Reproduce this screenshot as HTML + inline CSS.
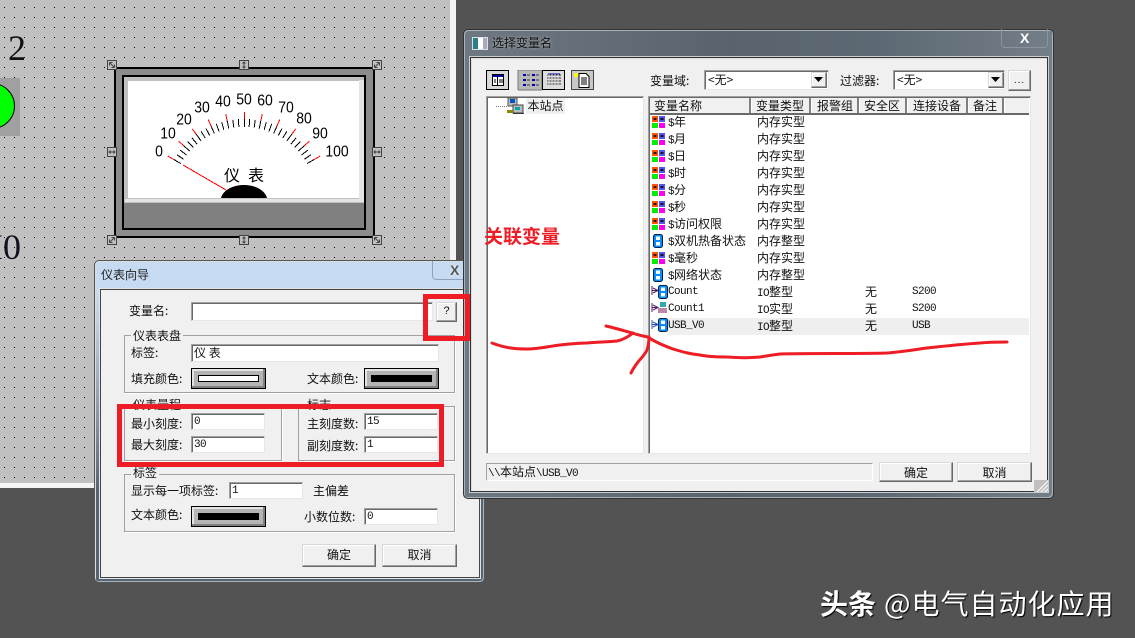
<!DOCTYPE html>
<html><head><meta charset="utf-8">
<style>
html,body{margin:0;padding:0}
#r{position:relative;width:1135px;height:638px;overflow:hidden;background:#535353;font:12px/14px "WenQuanYi Zen Hei","Noto Sans CJK SC",sans-serif;color:#111}
#r div,#r svg.a{position:absolute}
.t{white-space:nowrap}
.m{font:11px/14px "Liberation Mono",monospace;letter-spacing:-.6px}
.i{background:#fff;box-sizing:border-box;border:1px solid;border-color:#a0a0a0 #e6e6e6 #e6e6e6 #a0a0a0;box-shadow:inset 1px 1px 0 #696969;padding:1px 0 0 2px;white-space:nowrap}
.b{background:#f0f0f0;box-sizing:border-box;border:1px solid;border-color:#d8d8d8 #696969 #696969 #d8d8d8;box-shadow:inset -1px -1px 0 #a0a0a0,inset 1px 1px 0 #fff;text-align:center;line-height:20px}
.g{box-sizing:border-box;border:1px solid #a0a0a0;box-shadow:1px 1px 0 #fff}
.l{background:#f0f0f0;padding:0 2px;white-space:nowrap}
.c{box-sizing:border-box;width:75px;height:21px;background:#b4b4b4;border:1px solid #000;box-shadow:inset -2px -2px 0 #808080,inset 2px 2px 0 #e4e4e4}
#r svg.h{position:absolute;width:10px;height:10px}
.n{left:668px;white-space:nowrap}.y{left:757px;white-space:nowrap}
.hd{top:97px;height:16px;line-height:17px;white-space:nowrap}
.sp{top:98px;width:2px;height:15px;background:#808080;border-right:1px solid #fff}
.rd{background:#ee1c25}
.k{text-align:center;font:14px/20px "Liberation Sans",sans-serif;color:#000;transform:scaleY(1.12);white-space:nowrap}
</style></head><body><div id="r">

<!-- canvas -->
<svg class="a" style="left:0;top:0" width="450" height="483"><defs><pattern id="d" x="4" y="7" width="10" height="10" patternUnits="userSpaceOnUse"><rect width="1" height="1" fill="#000"/></pattern></defs><rect width="450" height="483" fill="#c0c0c0"/><rect width="450" height="483" fill="url(#d)"/></svg>
<div style="left:450px;top:0;width:6px;height:488px;background:#f4f4f4"></div>
<div style="left:0;top:483px;width:456px;height:5px;background:#f4f4f4"></div>

<div class="t" style="left:8px;top:28px;font:36px/40px 'Liberation Serif',serif;color:#111">2</div>
<div class="t" style="left:-9px;top:227px;font:36px/40px 'Liberation Serif',serif;color:#112">I0</div>
<div style="left:0;top:78px;width:20px;height:58px;background:#a0a0a0"></div>
<svg class="a" style="left:0;top:78px" width="20" height="58"><circle cx="-8" cy="28" r="22.5" fill="#0f0" stroke="#000"/></svg>

<!-- meter -->
<div style="left:114px;top:67px;width:261px;height:171px;box-sizing:border-box;background:#8c8c8c;border:2px solid #000"></div>
<div style="left:122px;top:75px;width:244px;height:155px;box-sizing:border-box;background:#808080;border:2px solid #000"></div>
<div style="left:124px;top:77px;width:240px;height:126px;background:#c0c0c0"></div>
<div style="left:359px;top:80px;width:5px;height:122px;background:#e4e4e4"></div>
<div style="left:125px;top:199px;width:239px;height:3px;background:#e4e4e4"></div>
<div style="left:128px;top:81px;width:231px;height:117px;background:#fff"></div>
<svg class="a" style="left:0;top:0" width="460" height="260">
<g stroke="#000" shape-rendering="crispEdges" fill="none">
<path transform="rotate(-60 244 200)" d="M244 127V119"/><path transform="rotate(-56 244 200)" d="M244 127V119"/><path transform="rotate(-52 244 200)" d="M244 127V119"/><path transform="rotate(-48 244 200)" d="M244 127V119"/><path transform="rotate(-44 244 200)" d="M244 127V119"/><path transform="rotate(-40 244 200)" d="M244 127V119"/><path transform="rotate(-36 244 200)" d="M244 127V119"/><path transform="rotate(-32 244 200)" d="M244 127V119"/><path transform="rotate(-28 244 200)" d="M244 127V119"/><path transform="rotate(-24 244 200)" d="M244 127V119"/><path transform="rotate(-20 244 200)" d="M244 127V119"/><path transform="rotate(-16 244 200)" d="M244 127V119"/><path transform="rotate(-12 244 200)" d="M244 127V119"/><path transform="rotate(-8 244 200)" d="M244 127V119"/><path transform="rotate(-4 244 200)" d="M244 127V119"/><path d="M244.500 127V119"/><path transform="rotate(4 244 200)" d="M244 127V119"/><path transform="rotate(8 244 200)" d="M244 127V119"/><path transform="rotate(12 244 200)" d="M244 127V119"/><path transform="rotate(16 244 200)" d="M244 127V119"/><path transform="rotate(20 244 200)" d="M244 127V119"/><path transform="rotate(24 244 200)" d="M244 127V119"/><path transform="rotate(28 244 200)" d="M244 127V119"/><path transform="rotate(32 244 200)" d="M244 127V119"/><path transform="rotate(36 244 200)" d="M244 127V119"/><path transform="rotate(40 244 200)" d="M244 127V119"/><path transform="rotate(44 244 200)" d="M244 127V119"/><path transform="rotate(48 244 200)" d="M244 127V119"/><path transform="rotate(52 244 200)" d="M244 127V119"/><path transform="rotate(56 244 200)" d="M244 127V119"/><path transform="rotate(60 244 200)" d="M244 127V119"/>
</g>
<g stroke="#f00" shape-rendering="crispEdges" fill="none">
<path transform="rotate(-60 244 200)" d="M244 119V112"/><path transform="rotate(-48 244 200)" d="M244 119V112"/><path transform="rotate(-36 244 200)" d="M244 119V112"/><path transform="rotate(-24 244 200)" d="M244 119V112"/><path transform="rotate(-12 244 200)" d="M244 119V112"/><path d="M244.500 119V112"/><path transform="rotate(12 244 200)" d="M244 119V112"/><path transform="rotate(24 244 200)" d="M244 119V112"/><path transform="rotate(36 244 200)" d="M244 119V112"/><path transform="rotate(48 244 200)" d="M244 119V112"/><path transform="rotate(60 244 200)" d="M244 119V112"/>
<path d="M183 165L226 190"/>
</g>
<path d="M221 198C223 190 233 185 244 185C255 185 265 190 267 198Z" fill="#000"/>
</svg>
<div class="k" style="left:149px;top:141px;width:20px">0</div>
<div class="k" style="left:153px;top:123px;width:30px">10</div>
<div class="k" style="left:169px;top:109px;width:30px">20</div>
<div class="k" style="left:187px;top:97px;width:30px">30</div>
<div class="k" style="left:208px;top:91px;width:30px">40</div>
<div class="k" style="left:229px;top:89px;width:30px">50</div>
<div class="k" style="left:250px;top:90px;width:30px">60</div>
<div class="k" style="left:271px;top:97px;width:30px">70</div>
<div class="k" style="left:289px;top:108px;width:30px">80</div>
<div class="k" style="left:305px;top:123px;width:30px">90</div>
<div class="k" style="left:317px;top:141px;width:40px">100</div>
<div class="t" style="left:224px;top:164px;font-size:16px;line-height:20px;color:#000">仪</div>
<div class="t" style="left:248px;top:164px;font-size:16px;line-height:20px;color:#000">表</div>

<svg class="h" style="left:107px;top:60px" viewBox="0 0 10 10"><rect x=".5" y=".5" width="9" height="9" fill="#c0c0c0" stroke="#444"/><path d="M2.500 2.500l5 5M2.500 2.500h3M2.500 2.500v3M7.500 7.500h-3M7.500 7.500v-3" stroke="#444" fill="none"/></svg>
<svg class="h" style="left:239px;top:60px" viewBox="0 0 10 10"><rect x=".5" y=".5" width="9" height="9" fill="#c0c0c0" stroke="#444"/><path d="M5 2v6M3.500 3.500L5 2l1.500 1.500M3.500 6.500L5 8l1.500-1.500" stroke="#444" fill="none"/></svg>
<svg class="h" style="left:372px;top:60px" viewBox="0 0 10 10"><rect x=".5" y=".5" width="9" height="9" fill="#c0c0c0" stroke="#444"/><path d="M7.500 2.500l-5 5M7.500 2.500h-3M7.500 2.500v3M2.500 7.500h3M2.500 7.500v-3" stroke="#444" fill="none"/></svg>
<svg class="h" style="left:107px;top:147px" viewBox="0 0 10 10"><rect x=".5" y=".5" width="9" height="9" fill="#c0c0c0" stroke="#444"/><path d="M2 5h6M3.500 3.500L2 5l1.500 1.500M6.500 3.500L8 5 6.500 6.500" stroke="#444" fill="none"/></svg>
<svg class="h" style="left:372px;top:147px" viewBox="0 0 10 10"><rect x=".5" y=".5" width="9" height="9" fill="#c0c0c0" stroke="#444"/><path d="M2 5h6M3.500 3.500L2 5l1.500 1.500M6.500 3.500L8 5 6.500 6.500" stroke="#444" fill="none"/></svg>
<svg class="h" style="left:107px;top:235px" viewBox="0 0 10 10"><rect x=".5" y=".5" width="9" height="9" fill="#c0c0c0" stroke="#444"/><path d="M7.500 2.500l-5 5M7.500 2.500h-3M7.500 2.500v3M2.500 7.500h3M2.500 7.500v-3" stroke="#444" fill="none"/></svg>
<svg class="h" style="left:239px;top:235px" viewBox="0 0 10 10"><rect x=".5" y=".5" width="9" height="9" fill="#c0c0c0" stroke="#444"/><path d="M5 2v6M3.500 3.500L5 2l1.500 1.500M3.500 6.500L5 8l1.500-1.500" stroke="#444" fill="none"/></svg>
<svg class="h" style="left:372px;top:235px" viewBox="0 0 10 10"><rect x=".5" y=".5" width="9" height="9" fill="#c0c0c0" stroke="#444"/><path d="M2.500 2.500l5 5M2.500 2.500h3M2.500 2.500v3M7.500 7.500h-3M7.500 7.500v-3" stroke="#444" fill="none"/></svg>

<!-- left dialog -->
<div style="left:94px;top:260px;width:391px;height:323px;box-sizing:border-box;border:1px solid #555;border-radius:5px;box-shadow:inset 1px 1px 0 #d8dee4,inset -1px -1px 0 #aab2ba;background:linear-gradient(180deg,#c6dbf1 0,#c6dbf1 30px,#c0d0e0 60px,#8d9aa8 150px,#566370 230px,#566370 100%)"></div>
<div class="t" style="left:101px;top:268px;color:#222">仪表向导</div>
<div style="left:432px;top:261px;width:40px;height:19px;box-sizing:border-box;border:1px solid #8da3ba;border-top:0;border-radius:0 0 4px 4px"></div>
<div class="t" style="left:450px;top:263px;font:bold 14px/14px 'Liberation Sans',sans-serif;color:#555;text-shadow:0 0 2px #fff">X</div>
<div style="left:100px;top:289px;width:380px;height:289px;box-sizing:border-box;background:#f0f0f0;border:1px solid #444;box-shadow:0 0 0 1px #dfe4e8"></div>

<div class="t" style="left:129px;top:304px">变量名:</div>
<div class="i" style="left:191px;top:302px;width:242px;height:19px"></div>
<div class="b" style="left:436px;top:302px;width:21px;height:20px;font:11px/16px 'Liberation Sans',sans-serif">?</div>

<div class="g" style="left:124px;top:335px;width:331px;height:58px"></div>
<div class="t l" style="left:131px;top:329px">仪表表盘</div>
<div class="t" style="left:131px;top:346px">标签:</div>
<div class="i" style="left:191px;top:344px;width:248px;height:18px">仪 表</div>
<div class="t" style="left:131px;top:372px">填充颜色:</div>
<div class="c" style="left:191px;top:368px"><div style="left:6px;top:6px;width:61px;height:7px;box-sizing:border-box;background:#fff;border:1px solid #000"></div></div>
<div class="t" style="left:307px;top:372px">文本颜色:</div>
<div class="c" style="left:364px;top:368px"><div style="left:6px;top:6px;width:61px;height:7px;background:#000"></div></div>

<div class="g" style="left:124px;top:406px;width:158px;height:55px"></div>
<div class="t l" style="left:131px;top:398px">仪表量程</div>
<div class="g" style="left:298px;top:406px;width:157px;height:55px"></div>
<div class="t l" style="left:305px;top:398px">标志</div>
<div class="t" style="left:131px;top:417px">最小刻度:</div>
<div class="i m" style="left:191px;top:413px;width:74px;height:17px">0</div>
<div class="t" style="left:131px;top:438px">最大刻度:</div>
<div class="i m" style="left:191px;top:436px;width:74px;height:17px">30</div>
<div class="t" style="left:307px;top:417px">主刻度数:</div>
<div class="i m" style="left:364px;top:413px;width:74px;height:17px">15</div>
<div class="t" style="left:307px;top:439px">副刻度数:</div>
<div class="i m" style="left:364px;top:436px;width:74px;height:17px">1</div>

<div class="g" style="left:124px;top:474px;width:331px;height:58px"></div>
<div class="t l" style="left:131px;top:466px">标签</div>
<div class="t" style="left:131px;top:484px">显示每一项标签:</div>
<div class="i m" style="left:229px;top:482px;width:74px;height:17px">1</div>
<div class="t" style="left:313px;top:484px">主偏差</div>
<div class="t" style="left:131px;top:508px">文本颜色:</div>
<div class="c" style="left:191px;top:506px"><div style="left:6px;top:6px;width:61px;height:7px;background:#000"></div></div>
<div class="t" style="left:304px;top:510px">小数位数:</div>
<div class="i m" style="left:364px;top:508px;width:74px;height:17px">0</div>
<div class="b" style="left:302px;top:544px;width:74px;height:23px">确定</div>
<div class="b" style="left:382px;top:544px;width:75px;height:23px">取消</div>

<!-- right dialog -->
<div style="left:463px;top:29px;width:591px;height:470px;box-sizing:border-box;border:1px solid #333;border-radius:5px;box-shadow:inset 1px 1px 0 #aab2ba,inset -1px -1px 0 #aab2ba;background:linear-gradient(90deg,#6e7882,#59636e 45%,#5c6873 70%,#747e88)"></div>
<div style="left:472px;top:37px;width:14px;height:11px;background:linear-gradient(90deg,#2c7f85 0 5px,#fff 5px 10px,#aab 10px);border:1px solid #dde"></div>
<div class="t" style="left:492px;top:36px;color:#111;text-shadow:0 0 3px #bbb">选择变量名</div>
<div style="left:1001px;top:29px;width:47px;height:19px;box-sizing:border-box;border:1px solid #8a949e;border-top:0;border-radius:0 0 4px 4px"></div>
<div class="t" style="left:1020px;top:31px;font:bold 14px/14px 'Liberation Sans',sans-serif;color:#fff">X</div>
<div style="left:470px;top:57px;width:578px;height:435px;box-sizing:border-box;background:#f0f0f0;border:1px solid #333;box-shadow:0 0 0 1px #c8ced4,inset 1px 1px 0 #ddd"></div>

<!-- toolbar -->
<svg class="a" style="left:486px;top:70px" width="110" height="21" shape-rendering="crispEdges">
<rect x=".5" y=".5" width="22" height="19" fill="#d8d8d8" stroke="#000"/>
<rect x="6.500" y="4.500" width="11" height="11" fill="#fff" stroke="#000"/><rect x="7" y="5" width="10" height="2" fill="#00a"/><path d="M11.500 7v8M13 10h4M13 12h4M8 10h2M8 12h2" stroke="#000"/>
<rect x="32" width="24" height="20" fill="#b8b8b8"/><path d="M32 20V0h24M56 0v20h-24" stroke="#777" fill="none"/>
<path d="M37 5h3M37 10h3M37 15h3M46 5h3M46 10h3M46 15h3" stroke="#00a" stroke-width="2" fill="none"/><path d="M41 5h3M41 10h3M41 15h3M50 5h3M50 10h3M50 15h3" stroke="#333" fill="none"/>
<rect x="56.500" y=".5" width="22" height="19" fill="#dcdcdc" stroke="#000"/>
<path d="M61 5h14M61 8h14M61 11h14M61 14h14" stroke="#333"/><path d="M62 4h12" stroke="#00a"/><path d="M63 4v12M66 4v12M69 4v12M72 4v12" stroke="#dcdcdc"/>
<rect x="85.500" y=".5" width="22" height="19" fill="#c8c8c8" stroke="#444"/>
<path d="M93 3.500h7l3 3v11h-10z" fill="#fff" stroke="#000"/><path d="M95 8h6M95 10h6M95 12h6M95 14h6" stroke="#000"/><rect x="88" y="3" width="4" height="4" fill="#ff0"/>
</svg>
<div class="t" style="left:650px;top:74px">变量域:</div>
<div class="i" style="left:704px;top:70px;width:125px;height:20px;padding:2px 0 0 3px">&lt;无&gt;</div>
<div class="b" style="left:811px;top:72px;width:16px;height:16px"></div>
<svg class="a" style="left:814px;top:77px" width="10" height="6"><path d="M0 0h9L4.500 5z" fill="#000"/></svg>
<div class="t" style="left:840px;top:74px">过滤器:</div>
<div class="i" style="left:893px;top:70px;width:112px;height:20px;padding:2px 0 0 3px">&lt;无&gt;</div>
<div class="b" style="left:988px;top:72px;width:16px;height:16px"></div>
<svg class="a" style="left:991px;top:77px" width="10" height="6"><path d="M0 0h9L4.500 5z" fill="#000"/></svg>
<div class="b" style="left:1008px;top:70px;width:23px;height:21px;line-height:20px;font-family:'Liberation Sans',sans-serif;font-size:10px;letter-spacing:1px">...</div>

<!-- tree -->
<div class="i" style="left:486px;top:96px;width:158px;height:358px"></div>
<svg class="a" style="left:495px;top:96px" width="32" height="20" shape-rendering="crispEdges">
<path d="M1 10.500h12" stroke="#777" stroke-dasharray="1 1"/>
<rect x="13" y="2" width="9" height="8" fill="#bbb" stroke="#555"/><rect x="15" y="3" width="5" height="4" fill="#05c"/>
<rect x="18" y="9" width="10" height="8" fill="#bbb" stroke="#444"/><rect x="20" y="11" width="5" height="3" fill="#0aa"/>
<rect x="12" y="14" width="6" height="3" fill="#880"/><rect x="18" y="17" width="11" height="1" fill="#333"/>
</svg>
<div class="t" style="left:526px;top:98px;width:39px;height:16px;background:#f0f0f0;line-height:15px;text-align:center">本站点</div>

<div class="t" style="left:484px;top:226px;font-size:19px;line-height:20px;font-weight:bold;color:#ee1c25;font-family:'Noto Sans CJK SC',sans-serif">关联变量</div>

<!-- list -->
<div class="i" style="left:648px;top:96px;width:383px;height:358px"></div>
<div style="left:650px;top:98px;width:379px;height:15px;background:#f0f0f0"></div>
<div style="left:650px;top:113px;width:379px;height:2px;background:#696969"></div>
<div class="t hd" style="left:654px">变量名称</div><div class="sp" style="left:749px"></div>
<div class="t hd" style="left:756px">变量类型</div><div class="sp" style="left:809px"></div>
<div class="t hd" style="left:817px">报警组</div><div class="sp" style="left:857px"></div>
<div class="t hd" style="left:864px">安全区</div><div class="sp" style="left:905px"></div>
<div class="t hd" style="left:913px">连接设备</div><div class="sp" style="left:966px"></div>
<div class="t hd" style="left:973px">备注</div><div class="sp" style="left:1002px"></div>
<div style="left:667px;top:318px;width:362px;height:17px;background:#efefef"></div>

<svg width="0" height="0" style="position:absolute"><defs>
<g id="q" shape-rendering="crispEdges"><rect width="6" height="6" fill="#f50"/><rect x="1.500" y="2" width="3" height="2" fill="#311"/><rect x="7" width="6" height="6" fill="#55e"/><rect x="8.500" y="2" width="3" height="2" fill="#113"/><rect y="7" width="6" height="5" fill="#0e0"/><rect x="7" y="7" width="6" height="5" fill="#f0e"/></g>
<g id="e"><rect x=".5" y=".5" width="9" height="13" rx="2" fill="#0a8cff" stroke="#024"/><rect x="3" y="2.500" width="4" height="3.500" fill="#fff"/><rect x="3" y="8" width="4" height="3.500" fill="#fff"/></g>
</defs></svg>
<svg class="a" style="left:652px;top:116px" width="14" height="120"><use href="#q" y="0"/><use href="#q" y="17"/><use href="#q" y="34"/><use href="#q" y="51"/><use href="#q" y="68"/><use href="#q" y="85"/><use href="#q" y="102"/></svg>
<svg class="a" style="left:653px;top:234px" width="12" height="50"><use href="#e" y="0"/><use href="#e" y="34"/></svg>
<svg class="a" style="left:652px;top:252px" width="14" height="12"><use href="#q"/></svg>
<svg class="a" style="left:651px;top:285px" width="18" height="50">
<path d="M1 1v9M1 5.500h6M2 3l5 2.500L2 8" stroke="#512060" fill="none"/><use href="#e" x="7" y="0"/>
<path d="M1 18v9M1 22.500h6M2 20l5 2.500L2 25" stroke="#512060" fill="none"/><rect x="9" y="17" width="6" height="5" fill="#3aa"/><rect x="7" y="23" width="9" height="5" fill="#b8a"/>
<path d="M1 35v9M1 39.500h6M2 37l5 2.500L2 42" stroke="#3050b0" fill="none"/><use href="#e" x="7" y="33"/>
</svg>

<div class="t n" style="top:115px"><span class="m">$</span>年</div><div class="y" style="top:115px">内存实型</div>
<div class="t n" style="top:132px"><span class="m">$</span>月</div><div class="y" style="top:132px">内存实型</div>
<div class="t n" style="top:149px"><span class="m">$</span>日</div><div class="y" style="top:149px">内存实型</div>
<div class="t n" style="top:166px"><span class="m">$</span>时</div><div class="y" style="top:166px">内存实型</div>
<div class="t n" style="top:183px"><span class="m">$</span>分</div><div class="y" style="top:183px">内存实型</div>
<div class="t n" style="top:200px"><span class="m">$</span>秒</div><div class="y" style="top:200px">内存实型</div>
<div class="t n" style="top:217px"><span class="m">$</span>访问权限</div><div class="y" style="top:217px">内存实型</div>
<div class="t n" style="top:234px"><span class="m">$</span>双机热备状态</div><div class="y" style="top:234px">内存整型</div>
<div class="t n" style="top:251px"><span class="m">$</span>毫秒</div><div class="y" style="top:251px">内存实型</div>
<div class="t n" style="top:268px"><span class="m">$</span>网络状态</div><div class="y" style="top:268px">内存整型</div>
<div class="t n m" style="top:285px">Count</div><div class="y" style="top:285px"><span class="m">IO</span>整型</div><div class="t" style="left:865px;top:285px">无</div><div class="t m" style="left:912px;top:285px">S200</div>
<div class="t n m" style="top:302px">Count1</div><div class="y" style="top:302px"><span class="m">IO</span>实型</div><div class="t" style="left:865px;top:302px">无</div><div class="t m" style="left:912px;top:302px">S200</div>
<div class="t n m" style="top:319px">USB_V0</div><div class="y" style="top:319px"><span class="m">IO</span>整型</div><div class="t" style="left:865px;top:319px">无</div><div class="t m" style="left:912px;top:319px">USB</div>

<!-- status -->
<div style="left:486px;top:463px;width:387px;height:18px;box-sizing:border-box;border:1px solid;border-color:#a0a0a0 #fff #fff #a0a0a0;background:#f0f0f0"></div>
<div class="t" style="left:488px;top:465px"><span class="m">\\</span>本站点<span class="m">\USB_V0</span></div>
<div class="b" style="left:879px;top:462px;width:74px;height:20px">确定</div>
<div class="b" style="left:957px;top:462px;width:75px;height:20px">取消</div>
<svg class="a" style="left:1034px;top:480px" width="14" height="12"><rect width="14" height="12" fill="#c0c0c0"/><path d="M3 12L14 1M7 12L14 5M11 12L14 9" stroke="#fff"/></svg>

<!-- annotations -->
<svg class="a" style="left:0;top:0" width="1135" height="638" fill="none" stroke="#ee1c25" stroke-width="3" stroke-linecap="round" stroke-linejoin="round">
<path d="M492 343C505 348 515 349 527 349C540 349 550 346 560 345C570 344 578 343 587 343C598 342 608 342 617 341C622 340 628 337 633 333"/>
<path d="M606 326C615 328 625 331 632 333C638 335 643 336 648 337C652 340 662 345 673 349C683 352 690 354 700 355C710 357 720 357 727 357C740 358 750 358 760 357C766 356 772 355 780 354C810 353 860 354 887 353C900 352 912 350 927 348C945 346 965 344 980 343C990 342 1000 342 1007 342"/>
<path d="M649 337C649 343 648 347 647 350C644 356 641 358 638 362C635 366 633 369 631 373"/>
</svg>
<div class="rd" style="left:423px;top:294px;width:47px;height:5px"></div>
<div class="rd" style="left:423px;top:336px;width:47px;height:5px"></div>
<div class="rd" style="left:423px;top:294px;width:5px;height:47px"></div>
<div class="rd" style="left:465px;top:294px;width:5px;height:47px"></div>
<div class="rd" style="left:117px;top:404px;width:327px;height:5px"></div>
<div class="rd" style="left:117px;top:462px;width:327px;height:5px"></div>
<div class="rd" style="left:117px;top:404px;width:5px;height:63px"></div>
<div class="rd" style="left:439px;top:404px;width:5px;height:63px"></div>

<!-- watermark -->
<div class="t" style="left:820px;top:585px;font:bold 28px/36px 'Noto Sans CJK SC',sans-serif;color:#fff;text-shadow:1px 1px 1px #000">头条</div>
<div class="t" style="left:884px;top:585px;font:28px/36px 'Noto Sans CJK SC',sans-serif;letter-spacing:1px;color:#fff;text-shadow:1px 1px 1px #000">@电气自动化应用</div>
</div></body></html>
